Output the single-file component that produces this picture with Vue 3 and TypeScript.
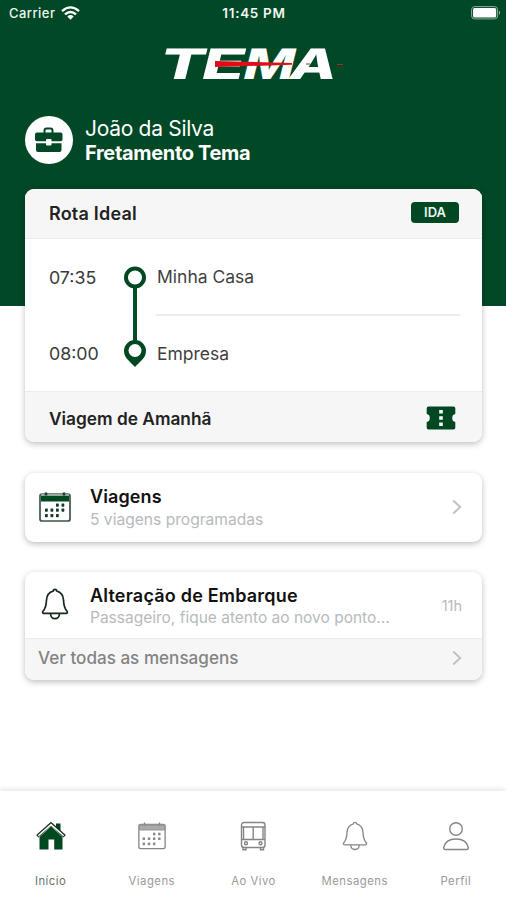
<script setup lang="ts">
interface Tab {
  id: string
  label: string
  active: boolean
}

const tabs: Tab[] = [
  { id: 'home', label: 'Início', active: true },
  { id: 'trips', label: 'Viagens', active: false },
  { id: 'live', label: 'Ao Vivo', active: false },
  { id: 'messages', label: 'Mensagens', active: false },
  { id: 'profile', label: 'Perfil', active: false },
]

const calendarDots: [number, number][] = [
  [17, 11.5], [22.5, 11.5],
  [6, 16.5], [11.5, 16.5], [17, 16.5], [22.5, 16.5],
  [6, 22], [11.5, 22], [17, 22],
]
</script>

<template>
  <div class="screen">
    <header class="top">
      <div class="status">
        <div class="carrier">
          <span>Carrier</span>
          <svg class="wifi" viewBox="0 0 19 14">
            <path d="M1 5.2Q9.500-2.400 18 5.200M4 8.400Q9.500 3.500 15 8.400" fill="none" stroke="#fff" stroke-width="2.300" />
            <path d="M6.300 10.400Q9.500 7.800 12.700 10.400L9.500 13.700Z" fill="#fff" />
          </svg>
        </div>
        <span class="clock">11:45 PM</span>
        <svg class="battery" viewBox="0 0 30 14">
          <rect x="0.600" y="0.600" width="26" height="12.300" rx="3" fill="none" stroke="#8fae9e" stroke-width="1" />
          <rect x="2" y="2" width="23.200" height="9.500" rx="1.500" fill="#fff" />
          <path d="M28 4.500Q30 6.700 28 9Z" fill="#a9c0b4" />
        </svg>
      </div>
      <svg class="logo" viewBox="0 0 206 54">
        <g transform="translate(0 43) skewX(-14)">
          <text y="0" class="wordmark"><tspan x="7" textLength="45" lengthAdjust="spacingAndGlyphs">T</tspan><tspan x="49" textLength="43" lengthAdjust="spacingAndGlyphs">E</tspan><tspan x="91" textLength="51" lengthAdjust="spacingAndGlyphs">M</tspan><tspan x="137" textLength="47" lengthAdjust="spacingAndGlyphs">A</tspan></text>
        </g>
        <path d="M65 25L142 27V28.800L65 31Z" fill="#e30b17" />
        <path d="M156 28h4M187 28.500h6" stroke="#a62a20" stroke-width="1.200" />
      </svg>
      <div class="user">
        <div class="avatar">
          <svg viewBox="0 0 30 28">
            <path d="M10.500 7V4.500Q10.500 2.500 12.500 2.500h4Q18.500 2.500 18.500 4.500V7" fill="none" stroke="#004826" stroke-width="2" />
            <rect x="1" y="6.500" width="27.500" height="8.800" rx="2" fill="#004826" />
            <path d="M2 17.300H27.500V24Q27.500 26 25.500 26H4Q2 26 2 24Z" fill="#004826" />
            <rect x="12" y="13" width="5.500" height="6.500" rx="1" fill="#fff" />
          </svg>
        </div>
        <div class="who">
          <span class="name">João da Silva</span>
          <strong class="company">Fretamento Tema</strong>
        </div>
      </div>
    </header>

    <main class="content">
      <section class="card route">
        <div class="route-head">
          <h2>Rota Ideal</h2>
          <span class="badge">IDA</span>
        </div>
        <div class="route-body">
          <div class="times">
            <span>07:35</span>
            <span>08:00</span>
          </div>
          <svg class="track" viewBox="0 0 24 104">
            <path d="M12 20V78" stroke="#004d26" stroke-width="4" />
            <circle cx="12" cy="12.500" r="9" fill="#fff" stroke="#004822" stroke-width="4" />
            <path d="M12 75A11 11 0 0 0 1 86C1 93 7 96.500 12 102C17 96.500 23 93 23 86A11 11 0 0 0 12 75Z" fill="#004822" />
            <circle cx="12" cy="85.500" r="6.500" fill="#fff" />
          </svg>
          <div class="stops">
            <span class="stop">Minha Casa</span>
            <span class="stop">Empresa</span>
          </div>
        </div>
        <div class="route-foot">
          <h2>Viagem de Amanhã</h2>
          <svg class="ticket" viewBox="0 0 30 24">
            <path d="M2.500 0.500H27.500Q29.300 0.500 29.300 2.300V8Q26.200 8.500 26.200 12T29.300 16V21.700Q29.300 23.500 27.500 23.500H2.500Q0.700 23.500 0.700 21.700V16Q3.800 15.500 3.800 12T0.700 8V2.300Q0.700 0.500 2.500 0.500Z" fill="#004822" />
            <path d="M13.200 4h3.600v3.400h-3.600zM13.200 10.300h3.600v3.400h-3.600zM13.200 16.600h3.600v3.400h-3.600z" fill="#fff" />
          </svg>
        </div>
      </section>

      <section class="card row trips">
        <svg class="row-icon calendar" viewBox="0 0 32 30">
          <rect x="1" y="2" width="30" height="27" rx="2" fill="#fff" stroke="#3b5546" stroke-width="1.700" />
          <path d="M2 3.500H30V9.500H2Z" fill="#00481f" />
          <path d="M2 2.800H30" stroke="#9aaa9f" stroke-width="2" />
          <path d="M7 0.500v3M25 0.500v3" stroke="#1d3d2a" stroke-width="2.500" />
          <rect v-for="(dot, i) in calendarDots" :key="i" :x="dot[0]" :y="dot[1]" width="2.800" height="3.200" rx="0.600" fill="#163a25" />
        </svg>
        <div class="row-text">
          <h3>Viagens</h3>
          <p>5 viagens programadas</p>
        </div>
        <svg class="chevron" viewBox="0 0 10 16"><path d="M1.200 1.500L8.200 8L1.200 14.500" /></svg>
      </section>

      <section class="card messages">
        <div class="row alert">
          <svg class="row-icon bell" viewBox="0 0 28 32">
            <path d="M14 1.300C13 1.300 12.300 2 12.300 3C8 4.200 5.700 7.500 5.500 12C5.300 18 4.500 20.500 2 23.200C1.200 24.200 1.600 25.400 2.800 25.400H25.200C26.400 25.400 26.800 24.200 26 23.200C23.500 20.500 22.700 18 22.500 12C22.300 7.500 20 4.200 15.700 3C15.700 2 15 1.300 14 1.300ZM9.500 25.600C9.500 32.400 18.500 32.400 18.500 25.600" />
          </svg>
          <div class="row-text">
            <h3>Alteração de Embarque</h3>
            <p>Passageiro, fique atento ao novo ponto...</p>
          </div>
          <span class="ago">11h</span>
        </div>
        <div class="all">
          <span>Ver todas as mensagens</span>
          <svg class="chevron" viewBox="0 0 10 16"><path d="M1.200 1.500L8.200 8L1.200 14.500" /></svg>
        </div>
      </section>
    </main>

    <nav class="tabs">
      <div v-for="tab in tabs" :key="tab.id" class="tab" :class="{ active: tab.active }">
        <svg v-if="tab.id === 'home'" class="tab-icon" viewBox="0 0 30 30">
          <path d="M20 2.500H24.500V11L20 7Z" fill="#00421f" />
          <path d="M15 5.500L26.500 16V28.500H18.200V18.500H12.500V28.500H3.500V16Z" fill="#00481f" />
          <path d="M1.300 15.300L15 3L28.700 15.300" fill="none" stroke="#123020" stroke-width="3.400" />
          <path d="M2.300 14.800L15 3.600L27.700 14.800" fill="none" stroke="#fff" stroke-width="1.500" />
        </svg>
        <svg v-else-if="tab.id === 'trips'" class="tab-icon line" viewBox="0 0 32 30">
          <rect x="2" y="2.500" width="28" height="26" rx="2" />
          <path d="M2.500 3.500H29.500V8.500H2.500Z" fill="#aaa" stroke="#999" />
          <path d="M8 0.500v3M24 0.500v3" />
          <rect v-for="(dot, i) in calendarDots" :key="i" class="dot" :x="dot[0]" :y="dot[1]" width="2.600" height="2.800" />
        </svg>
        <svg v-else-if="tab.id === 'live'" class="tab-icon line" viewBox="0 0 30 30">
          <rect x="3.500" y="1.500" width="23.500" height="25" rx="2.500" />
          <path d="M3.500 6H27M3.500 18.500H27M15.200 6V18.500M5.500 6V18.500M25 6V18.500M5 26.500V28.800H8V26.500M22.500 26.500V28.800H25.500V26.500" />
          <circle cx="8" cy="22.300" r="1.500" /><circle cx="22.500" cy="22.300" r="1.500" />
        </svg>
        <svg v-else-if="tab.id === 'messages'" class="tab-icon line" viewBox="-1 0 30 32">
          <path d="M14 1.500C13 1.500 12.300 2.200 12.300 3C8 4.200 5.700 7.500 5.500 12C5.300 18 4.500 20.500 2 23.200C1.200 24.200 1.600 25.400 2.800 25.400H25.200C26.400 25.400 26.800 24.200 26 23.200C23.500 20.500 22.700 18 22.500 12C22.300 7.500 20 4.200 15.700 3C15.700 2.200 15 1.500 14 1.500ZM9.500 25.600C9.500 32 18.500 32 18.500 25.600" />
        </svg>
        <svg v-else class="tab-icon line" viewBox="0 0 30 30">
          <circle cx="15" cy="8" r="6.300" />
          <path d="M4.500 28.500Q2.500 28.500 2.700 26.500Q4.500 18 15 18T27.300 26.500Q27.500 28.500 25.500 28.500Z" />
        </svg>
        <span class="tab-label">{{ tab.label }}</span>
      </div>
    </nav>
  </div>
</template>

<style>
body {
  margin: 0;
  background: #fff;
}
</style>

<style scoped>
.screen {
  box-sizing: border-box;
  width: 506px;
  height: 900px;
  display: flex;
  flex-direction: column;
  overflow: hidden;
  font-family: Inter, "Liberation Sans", sans-serif;
  background: linear-gradient(#004826 306px, #fff 306px);
}
h2, h3, p {
  margin: 0;
}
.top {
  height: 189px;
  flex: none;
  color: #fff;
}
.status {
  display: grid;
  grid-template-columns: 1fr auto 1fr;
  align-items: center;
  height: 26px;
  padding: 0 5px 0 7px;
  font-size: 13px;
  color: #f2f6f3;
}
.carrier {
  display: flex;
  align-items: center;
  gap: 6px;
  padding-left: 2px;
  letter-spacing: 0.45px;
  font-weight: 500;
}
.wifi {
  width: 19px;
  height: 14px;
}
.clock {
  font-weight: 600;
  font-size: 13.5px;
  letter-spacing: 0.7px;
}
.battery {
  width: 30px;
  height: 14px;
  justify-self: end;
}
.logo {
  display: block;
  width: 206px;
  height: 54px;
  margin: 10px 0 0 150px;
}
.wordmark {
  font-family: Inter, sans-serif;
  font-size: 42px;
  font-weight: 800;
  fill: #fff;
}
.user {
  display: flex;
  align-items: center;
  gap: 12px;
  margin: 24px 0 0 25px;
}
.avatar {
  display: flex;
  align-items: center;
  justify-content: center;
  width: 48px;
  height: 48px;
  border-radius: 50%;
  background: #fff;
}
.avatar svg {
  width: 30px;
  height: 28px;
}
.who {
  display: flex;
  flex-direction: column;
  padding-top: 2px;
}
.name {
  font-size: 21px;
  line-height: 25px;
  font-weight: 400;
  letter-spacing: -0.3px;
}
.company {
  font-size: 20px;
  line-height: 25px;
  font-weight: 700;
  letter-spacing: -0.33px;
}
.content {
  flex: 1;
  padding: 0 24px 0 25px;
}
.card {
  border-radius: 9px;
  overflow: hidden;
  background: #fff;
  box-shadow: 0 2px 6px rgba(0, 0, 0, 0.26);
}
.route {
  height: 253px;
}
.route-head,
.route-foot {
  box-sizing: border-box;
  display: flex;
  align-items: center;
  justify-content: space-between;
  background: #f6f6f6;
  padding: 0 23px 0 24px;
}
.route-head {
  height: 50px;
  padding-bottom: 2px;
  border-bottom: 1px solid #ececec;
}
.route-foot {
  height: 51px;
  border-top: 1px solid #ececec;
  padding-top: 2px;
}
h2 {
  font-size: 18px;
  font-weight: 600;
  color: #222;
}
.route-head h2 {
  padding-top: 1px;
  letter-spacing: 0.2px;
}
.route-foot h2 {
  font-size: 17.3px;
}
.badge {
  width: 48px;
  height: 21px;
  border-radius: 4px;
  background: #004822;
  color: #eef4f0;
  font-size: 13px;
  line-height: 21px;
  font-weight: 600;
  text-align: center;
}
.route-body {
  display: flex;
  height: 152px;
}
.times {
  display: flex;
  flex-direction: column;
  width: 74px;
  padding: 1px 0 0 24px;
  font-size: 17.8px;
  color: #3a3a3a;
}
.times span {
  height: 76px;
  line-height: 76px;
}
.track {
  width: 24px;
  height: 104px;
  margin-top: 26px;
}
.stops {
  flex: 1;
  margin: 0 22px 0 9px;
  font-size: 17.5px;
  color: #3f3f3f;
}
.stop {
  box-sizing: border-box;
  display: block;
  height: 77px;
  line-height: 75px;
  padding-left: 1px;
}
.stop:first-child {
  border-bottom: 2px solid #ececec;
}
.ticket {
  width: 30px;
  height: 24px;
  margin-right: 3px;
}
.row {
  display: flex;
  align-items: center;
}
.trips {
  height: 69px;
  margin-top: 31px;
}
.row-icon {
  flex: none;
}
.calendar {
  width: 32px;
  height: 30px;
  margin: 0 19px 2px 14px;
}
.bell {
  width: 28px;
  height: 32px;
  margin: 0 21px 2px 16px;
}
.bell path {
  fill: none;
  stroke: #15291d;
  stroke-width: 1.7;
}
.row-text {
  flex: 1;
}
h3 {
  font-size: 18px;
  line-height: 24px;
  font-weight: 600;
  letter-spacing: 0.1px;
  color: #111;
}
.alert h3 {
  letter-spacing: 0.2px;
}
.row-text p {
  font-size: 15.6px;
  line-height: 22px;
  color: #b7babd;
  white-space: nowrap;
}
.chevron {
  width: 10px;
  height: 16px;
  margin-right: 20px;
}
.trips .chevron {
  margin-bottom: 2px;
}
.chevron path {
  fill: none;
  stroke: #c2c2c2;
  stroke-width: 2;
}
.messages {
  height: 108px;
  margin-top: 30px;
}
.alert {
  height: 66px;
}
.alert .row-text p {
  font-size: 15.5px;
  line-height: 19px;
}
.ago {
  margin-right: 20px;
  font-size: 14.5px;
  color: #b9b9b9;
}
.all {
  box-sizing: border-box;
  display: flex;
  align-items: center;
  justify-content: space-between;
  height: 42px;
  padding: 0 0 3px 13px;
  border-top: 1px solid #ececec;
  background: #f6f6f6;
  font-size: 17.1px;
  font-weight: 500;
  color: #838383;
}
.all span {
  padding-bottom: 2px;
}
.tabs {
  flex: none;
  display: grid;
  grid-template-columns: repeat(5, 1fr);
  height: 109px;
  background: #fff;
  box-shadow: 0 -2px 5px rgba(0, 0, 0, 0.1);
}
.tab {
  display: flex;
  flex-direction: column;
  align-items: center;
  padding-top: 30px;
}
.tab-icon {
  width: 30px;
  height: 30px;
}
.tab:nth-child(n + 3) {
  padding-left: 1px;
}
.line {
  fill: none;
  stroke: #858585;
  stroke-width: 1.4;
}
.dot {
  fill: #888;
  stroke: none;
}
.tab-label {
  margin-top: 22px;
  font-size: 11.3px;
  line-height: 17px;
  letter-spacing: 0.5px;
  color: #999;
}
.active .tab-label {
  color: #66736c;
}
</style>
